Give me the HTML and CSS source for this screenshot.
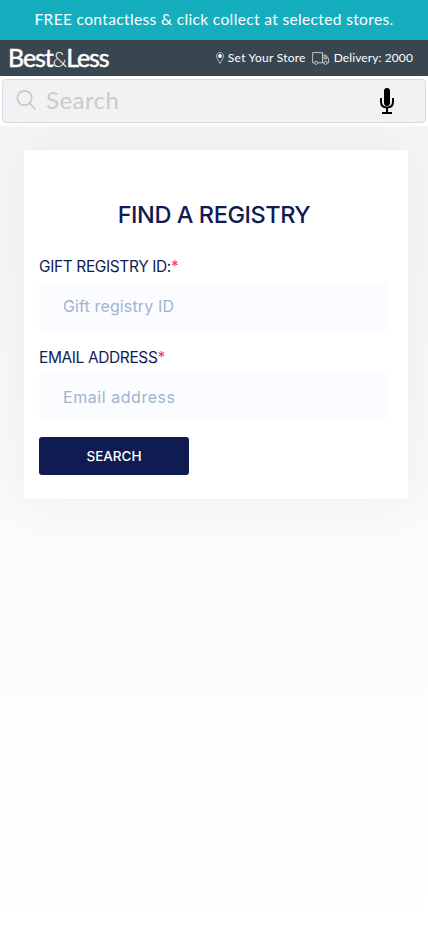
FILE: index.html
```
<!DOCTYPE html>
<html lang="en">
<head>
<meta charset="utf-8">
<meta name="viewport" content="width=device-width, initial-scale=1">
<title>Find a Registry</title>
<link rel="stylesheet" href="styles.css">
</head>
<body>
<div class="promo"><span>FREE contactless &amp; click collect at selected stores.</span></div>
<header class="header">
  <a class="logo"><span class="best">Best</span><span class="amp">&amp;</span><span class="less">Less</span></a>
  <div class="links">
    <svg class="pin" width="8" height="12" viewBox="0 0 8 12"><path d="M4 .5C2 .5.5 2 .5 4c0 2.200 2 4.500 3.500 7.400C5.500 8.500 7.500 6.200 7.500 4 7.500 2 6 .5 4 .5Z" fill="none" stroke="#cdd1d4" stroke-width=".8"/><circle cx="4" cy="4" r="1.900" fill="#fff"/></svg>
    <span class="store">Set Your Store</span>
    <svg class="truck" width="18" height="13" viewBox="0 0 18 13" fill="none" stroke="#cdd1d4" stroke-width=".9"><path d="M2.500 10.800H.6V.6H10.500V10.800H5.800M10.500 3.200H14.200L16.500 6.500V10.800H15.200M12 10.800H10.500M12 4.800H14L15 6.800H12Z"/><circle cx="4.200" cy="10.800" r="1.600"/><circle cx="13.600" cy="10.800" r="1.600"/></svg>
    <span class="delivery">Delivery: 2000</span>
  </div>
</header>
<div class="searchbar">
  <div class="searchbox">
    <svg class="glass" width="22" height="22" viewBox="0 0 22 22" fill="none" stroke="#c8c8c8" stroke-width="1.700"><circle cx="9.500" cy="9" r="7.200"/><path d="M14.500 14L20.500 20.500"/></svg>
    <span class="search-text">Search</span>
    <svg class="mic" width="16" height="28" viewBox="0 0 16 28"><rect x="5" y="1" width="6" height="18" rx="3"/><path d="M2 11V14.500Q2 20.500 8 20.500T14 14.500V11M8 20.500V26M3 26H13" fill="none" stroke="#000" stroke-width="2"/></svg>
  </div>
</div>
<main class="page">
  <form class="card">
    <h1><span>FIND A REGISTRY</span></h1>
    <label class="l1"><span>GIFT REGISTRY ID:</span><b>*</b></label>
    <div class="field f1"><span>Gift registry ID</span></div>
    <label class="l2"><span>EMAIL ADDRESS</span><b>*</b></label>
    <div class="field f2"><span>Email address</span></div>
    <button type="button"><span>SEARCH</span></button>
  </form>
</main>
</body>
</html>
```
FILE: styles.css
```
* { box-sizing: border-box; }
body {
  margin: 0;
  min-height: 930px;
  background: #fff;
  font-family: Inter, sans-serif;
  overflow: hidden;
}
.promo {
  height: 40px;
  background: #14aebf;
  color: #fff;
  font: 15.500px/38px Lato, sans-serif;
  letter-spacing: .36px;
  text-align: center;
  white-space: nowrap;
}
.header {
  height: 36px;
  padding: 0 15px 0 8px;
  background: #394650;
  color: #fff;
  display: flex;
  align-items: center;
  justify-content: space-between;
  white-space: nowrap;
}
.logo {
  display: flex;
  align-items: baseline;
  font: 400 25px/36px Lato, sans-serif;
  letter-spacing: -1.100px;
  -webkit-text-stroke: .5px #fff;
}
.amp { font-size: 21px; font-weight: 300; -webkit-text-stroke: 0; }
.links {
  display: flex;
  align-items: center;
  font: 12px/36px Lato, sans-serif;
}
.store { margin: 0 6px 0 4px; letter-spacing: .25px; }
.delivery { margin-left: 4px; letter-spacing: .1px; }
.searchbar { height: 50px; padding: 3px 2px; background: #fff; }
.searchbox {
  height: 44px;
  padding: 0 30px 0 12px;
  border: 1px solid #d9dbe2;
  border-radius: 4px;
  background: #f1f2f4;
  display: flex;
  align-items: center;
}
.glass { margin-bottom: 3px; }
.search-text {
  margin: 0 0 2px 9px;
  color: #cbcbcb;
  font: 24px/40px Lato, sans-serif;
  letter-spacing: .45px;
}
.mic { margin-left: auto; }
.page {
  height: 804px;
  padding: 24px 20px 0 24px;
  background: linear-gradient(#f5f5f6 0, #f7f8f8 250px, #fafbfb 450px, #fefefe 700px, #fff);
}
.card {
  height: 349px;
  padding: 45px 19px 24px 15px;
  background: #fff;
  box-shadow: 0 0 50px rgba(0, 0, 0, .05);
  color: #101b52;
}
h1 {
  margin: 0 0 22px;
  text-align: center;
  font-size: 23.500px;
  line-height: 40px;
  font-weight: 500;
  letter-spacing: -.43px;
}
label {
  display: block;
  height: 25px;
  font-size: 15.500px;
  line-height: 19px;
  letter-spacing: -.39px;
  white-space: nowrap;
}
label b { color: #ee3764; font-weight: 400; }
.field {
  height: 48px;
  padding-left: 24px;
  border-radius: 3px;
  background: #fafcff;
  color: #a0b3cd;
  font-size: 16px;
  line-height: 49px;
  letter-spacing: .13px;
}
.f1 { margin-bottom: 18px; }
.f2 { letter-spacing: .55px; }
button {
  display: block;
  width: 150px;
  height: 38px;
  margin-top: 16px;
  padding: 0;
  border: 0;
  border-radius: 3px;
  background: #101b52;
  color: #fff;
  font: 500 13.500px/38px Inter, sans-serif;
}
```
